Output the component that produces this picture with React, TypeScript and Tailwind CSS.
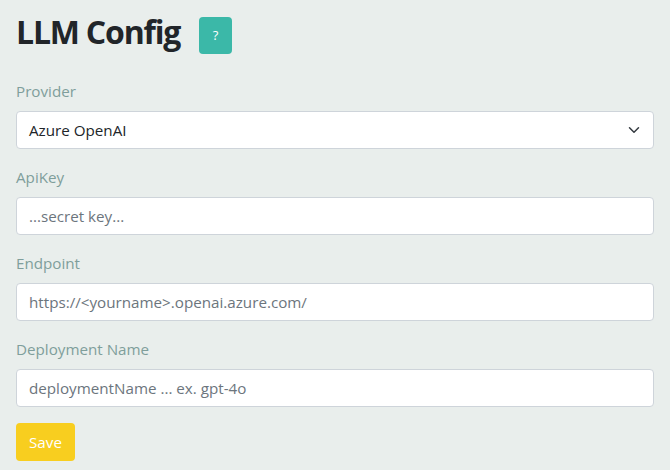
import React from "react";

const font = { fontFamily: '"Open Sans", "Noto Sans", sans-serif' };

function Field({ label, children }: { label: string; children: React.ReactNode }) {
  return (
    <div className="mb-4">
      <label className="mb-2 block text-[15.2px] leading-6 text-[#7f9e9b]">{label}</label>
      {children}
    </div>
  );
}

function Input({ placeholder }: { placeholder: string }) {
  return (
    <input
      placeholder={placeholder}
      className="block h-[38px] w-full rounded border border-[#ced4da] bg-white px-3 text-[15.2px] text-[#212529] placeholder:text-[#6c757d] outline-none"
    />
  );
}

export default function App() {
  return (
    <div className="min-h-[470px] w-full bg-[#e9eeec] px-4 pt-4" style={font}>
      <div className="mb-[25px] flex items-start">
        <h1 className="-mt-[3px] text-[32px] font-bold leading-[38px] tracking-[-1.2px] text-[#212529]">LLM Config</h1>
        <button className="ml-[19px] mt-[1px] flex h-[37px] w-[33px] items-center justify-center rounded bg-[#3bb8a8] text-[13px] text-white">
          ?
        </button>
      </div>
      <Field label="Provider">
        <div className="relative flex h-[38px] w-full items-center rounded border border-[#ced4da] bg-white px-3">
          <span className="text-[15.2px] text-[#212529]">Azure OpenAI</span>
          <svg className="absolute right-[11px] top-1/2 -translate-y-1/2" width="16" height="12" viewBox="0 0 16 16" fill="none">
            <path d="M2 5l6 6 6-6" stroke="#343a40" strokeWidth="2" strokeLinecap="round" strokeLinejoin="round" />
          </svg>
        </div>
      </Field>
      <Field label="ApiKey">
        <Input placeholder="...secret key..." />
      </Field>
      <Field label="Endpoint">
        <Input placeholder="https://<yourname>.openai.azure.com/" />
      </Field>
      <Field label="Deployment Name">
        <Input placeholder="deploymentName ... ex. gpt-4o" />
      </Field>
      <button className="h-[38px] w-[59px] rounded bg-[#f8ce1f] text-[15.2px] text-white">Save</button>
    </div>
  );
}
